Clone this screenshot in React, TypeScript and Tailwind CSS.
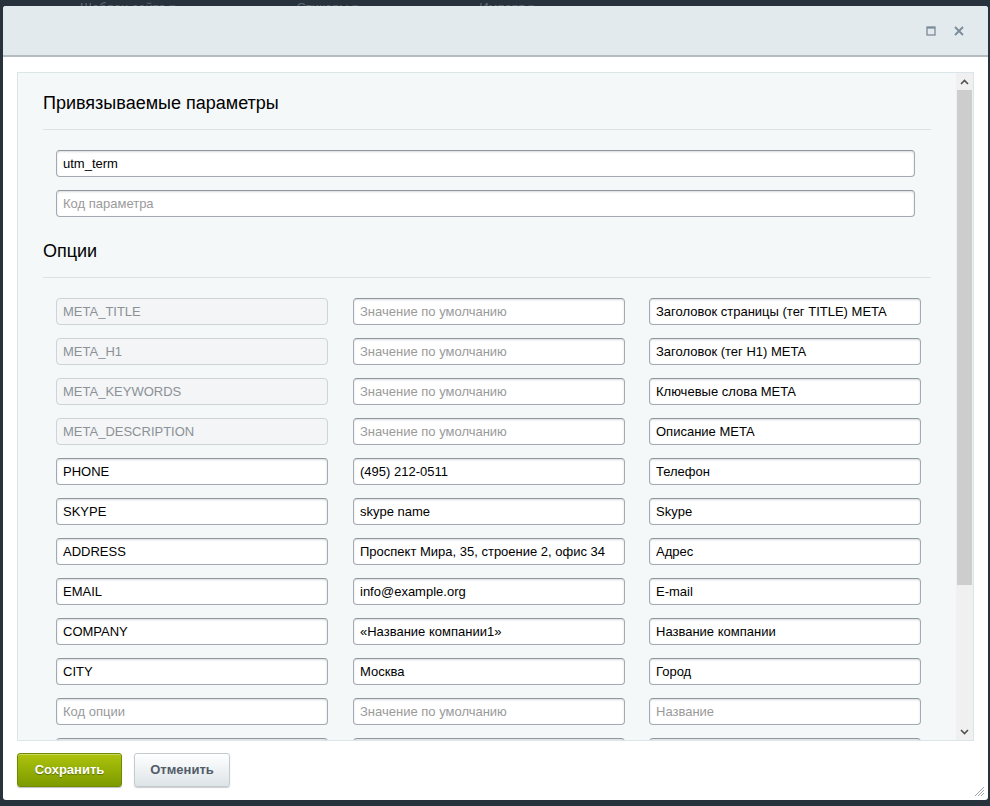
import React from 'react'

const font = { fontFamily: '"Liberation Sans", Arial, sans-serif' }

type Row = { code: string; value: string; name: string; locked?: boolean }

const rows: Row[] = [
  { code: 'META_TITLE', value: '', name: 'Заголовок страницы (тег TITLE) META', locked: true },
  { code: 'META_H1', value: '', name: 'Заголовок (тег H1) META', locked: true },
  { code: 'META_KEYWORDS', value: '', name: 'Ключевые слова META', locked: true },
  { code: 'META_DESCRIPTION', value: '', name: 'Описание META', locked: true },
  { code: 'PHONE', value: '(495) 212-0511', name: 'Телефон' },
  { code: 'SKYPE', value: 'skype name', name: 'Skype' },
  { code: 'ADDRESS', value: 'Проспект Мира, 35, строение 2, офис 34', name: 'Адрес' },
  { code: 'EMAIL', value: 'info@example.org', name: 'E-mail' },
  { code: 'COMPANY', value: '«Название компании1»', name: 'Название компании' },
  { code: 'CITY', value: 'Москва', name: 'Город' },
  { code: '', value: '', name: '' },
  { code: '', value: '', name: '' },
]

function Field({
  value,
  placeholder,
  disabled,
  className = '',
}: {
  value?: string
  placeholder?: string
  disabled?: boolean
  className?: string
}) {
  return (
    <input
      readOnly
      defaultValue={value}
      placeholder={placeholder}
      disabled={disabled}
      className={
        'block h-[27px] rounded-[4px] border px-[6px] text-[13px] outline-none placeholder:text-[#9a9a9a] ' +
        (disabled
          ? 'border-[#cdd3d7] bg-[#f3f5f6] text-[#8c9196] '
          : 'border-[#a3a9b1] border-t-[#8f969f] bg-white text-black shadow-[inset_0_1px_2px_rgba(180,188,191,0.5)] ') +
        className
      }
      style={font}
    />
  )
}

function Heading({ children }: { children: React.ReactNode }) {
  return (
    <div className="border-b border-[#dbe1e4] pb-[14px]">
      <h2 className="text-[18px] leading-[24px] text-black" style={font}>
        {children}
      </h2>
    </div>
  )
}

function Scrollbar() {
  return (
    <div className="flex w-[17px] flex-col bg-[#f0f0f0]">
      <div className="flex h-[17px] items-center justify-center">
        <svg width="9" height="6" viewBox="0 0 9 6">
          <path d="M1 5 L4.5 1.5 L8 5" fill="none" stroke="#505050" strokeWidth="1.6" />
        </svg>
      </div>
      <div className="mx-[1px] h-[495px] bg-[#cdcdcd]" />
      <div className="flex-1" />
      <div className="flex h-[17px] items-center justify-center">
        <svg width="9" height="6" viewBox="0 0 9 6">
          <path d="M1 1 L4.5 4.5 L8 1" fill="none" stroke="#505050" strokeWidth="1.6" />
        </svg>
      </div>
    </div>
  )
}

export default function App() {
  return (
    <div className="relative h-[806px] w-[990px] overflow-hidden bg-[#28323c]" style={font}>
      <div className="flex h-[6px] items-end gap-[120px] overflow-hidden pl-[80px] text-[13px] leading-[13px] text-[#5e6872]">
        <span className="translate-y-[8px]">Шаблон сайта ▾</span>
        <span className="translate-y-[8px]">Стикеры ▾</span>
        <span className="translate-y-[8px]">Импорт ▾</span>
      </div>

      <div className="ml-[3px] flex h-[794px] w-[985px] flex-col rounded-[3px] bg-white">
        <div className="flex h-[51px] items-center justify-end gap-[18px] rounded-t-[3px] border-b-2 border-[#b5bdc1] bg-[#e2eaed] pr-[24px]">
          <svg width="10" height="10" viewBox="0 0 10 10">
            <rect x="1" y="1" width="8" height="8" fill="none" stroke="#7b8a98" strokeWidth="1.3" />
            <line x1="1" y1="1.8" x2="9" y2="1.8" stroke="#7b8a98" strokeWidth="1.6" />
          </svg>
          <svg width="10" height="10" viewBox="0 0 10 10">
            <path d="M1 1 L9 9 M9 1 L1 9" stroke="#7b8a98" strokeWidth="1.8" />
          </svg>
        </div>

        <div className="px-[14px] pt-[15px]">
          <div className="flex h-[669px] border border-[#dce6e9] bg-[#f4f8f9]">
            <div className="flex-1 overflow-hidden px-[25px] pt-[18px]">
              <Heading>Привязываемые параметры</Heading>
              <div className="flex flex-col gap-[13px] pl-[13px] pr-[16px] pt-[20px]">
                <Field value="utm_term" className="w-full" />
                <Field placeholder="Код параметра" className="w-full" />
              </div>

              <div className="pt-[22px]">
                <Heading>Опции</Heading>
              </div>
              <div className="flex flex-col gap-[13px] pl-[13px] pt-[20px]">
                {rows.map((r, i) => (
                  <div key={i} className="flex gap-[24px]">
                    <Field
                      value={r.code}
                      placeholder="Код опции"
                      disabled={r.locked}
                      className="w-[272px]"
                    />
                    <Field
                      value={r.value}
                      placeholder="Значение по умолчанию"
                      className="ml-[1px] w-[272px]"
                    />
                    <Field value={r.name} placeholder="Название" className="w-[272px]" />
                  </div>
                ))}
              </div>
            </div>
            <Scrollbar />
          </div>
        </div>

        <div className="relative flex flex-1 items-start gap-[12px] px-[14px] pt-[12px]">
          <button
            className="h-[34px] w-[105px] rounded-[3px] border border-[#6e8a00] bg-gradient-to-b from-[#aec30d] to-[#7d9b00] text-[13px] font-bold text-white shadow-[0_1px_1px_rgba(0,0,0,0.25),inset_0_1px_0_rgba(255,255,255,0.35)] [text-shadow:0_1px_1px_rgba(0,0,0,0.35)]"
            style={font}
          >
            Сохранить
          </button>
          <button
            className="h-[34px] w-[96px] rounded-[3px] border border-[#c4cbcf] bg-gradient-to-b from-white to-[#dde4e7] text-[13px] font-bold text-[#535c69] shadow-[0_1px_1px_rgba(0,0,0,0.2)]"
            style={font}
          >
            Отменить
          </button>
          <svg className="absolute bottom-[3px] right-[3px]" width="12" height="12" viewBox="0 0 12 12">
            <path d="M11 2 L2 11 M11 5 L5 11 M11 8 L8 11" stroke="#9aa3a8" strokeWidth="1" />
          </svg>
        </div>
      </div>
    </div>
  )
}
